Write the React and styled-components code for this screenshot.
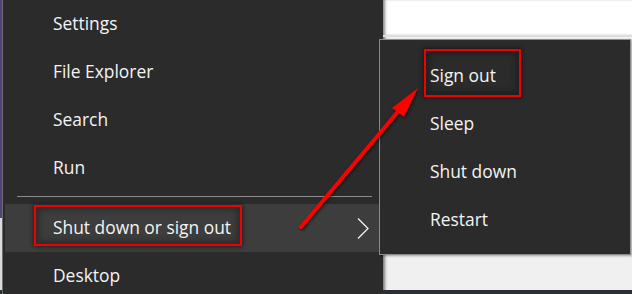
import React from "react";
import styled, { createGlobalStyle } from "styled-components";

const GlobalStyle = createGlobalStyle`
  html, body {
    margin: 0;
    padding: 0;
    background: #2b2b2b;
    overflow: hidden;
  }
  * {
    box-sizing: border-box;
  }
`;

const mainItems = ["Settings", "File Explorer", "Search", "Run"];
const powerItems = ["Sign out", "Sleep", "Shut down", "Restart"];

const App = () => {
  return (
    <>
      <GlobalStyle />
      <Screen>
        <EdgeStrip />
        <StartMenu>
          {mainItems.map((label) => (
            <MenuItem key={label}>{label}</MenuItem>
          ))}
          <Separator />
          <MenuItem active>
            Shut down or sign out
            <Chevron viewBox="0 0 12 21">
              <polyline points="1,0.5 11,10.5 1,20.5" />
            </Chevron>
          </MenuItem>
          <MenuItem>Desktop</MenuItem>
        </StartMenu>
        <DesktopArea>
          <WindowTop />
          <WindowBody />
          <Taskbar />
        </DesktopArea>

        <Flyout>
          {powerItems.map((label) => (
            <FlyoutItem key={label}>{label}</FlyoutItem>
          ))}
        </Flyout>

        <Callout left={34} top={205} width={208} height={41} />
        <Callout left={424} top={49} width={97} height={48} />

        <ArrowLayer viewBox="0 0 632 294">
          <line x1="301" y1="227" x2="401" y2="108" />
          <polygon points="418,88 392,108 404,117" />
        </ArrowLayer>
      </Screen>
    </>
  );
};

export default App;

const Screen = styled.div`
  position: relative;
  display: flex;
  width: 632px;
  height: 294px;
  overflow: hidden;
  font-family: "Open Sans", "Noto Sans", sans-serif;
`;

const EdgeStrip = styled.div`
  width: 3px;
  flex-shrink: 0;
  border-right: 1px solid #6d6d6d;
  background: linear-gradient(
    to bottom,
    #54437a 0,
    #54437a 218px,
    #dcdcdc 218px,
    #dcdcdc 290px,
    #263032 290px
  );
`;

const StartMenu = styled.div`
  width: 380px;
  flex-shrink: 0;
  display: flex;
  flex-direction: column;
  padding-left: 2px;
  background: #2b2b2b;
`;

const MenuItem = styled.div`
  position: relative;
  display: flex;
  align-items: center;
  height: 48px;
  flex-shrink: 0;
  padding: 0 0 3px 48px;
  font-size: 17.4px;
  color: #f4f4f4;
  background: ${({ active }) => (active ? "#3d3d3d" : "transparent")};
`;

const Chevron = styled.svg`
  position: absolute;
  right: 14px;
  top: 14px;
  width: 12px;
  height: 21px;
  fill: none;
  stroke: #f2f2f2;
  stroke-width: 1.3;
`;

const Separator = styled.div`
  height: 12px;
  flex-shrink: 0;
  padding: 4px 11px 0 12px;

  &::before {
    content: "";
    display: block;
    height: 1px;
    background: #8a8a8a;
  }
`;

const DesktopArea = styled.div`
  flex: 1;
  display: flex;
  flex-direction: column;
  background: #f0f0f0;
  box-shadow: inset 3px 0 3px -1px #7a7a7a;
`;

const WindowTop = styled.div`
  height: 37px;
  background: #ffffff;
  border-bottom: 2px solid #dedede;
  box-shadow: inset 3px 0 3px -1px #8a8a8a;
`;

const WindowBody = styled.div`
  flex: 1;
`;

const Taskbar = styled.div`
  height: 4px;
  background: #263032;
`;

const Flyout = styled.div`
  position: absolute;
  left: 379px;
  top: 39px;
  width: 252px;
  height: 216px;
  display: flex;
  flex-direction: column;
  padding-top: 12px;
  background: #2b2b2b;
  border: 1px solid #8c8c8c;
  box-shadow: 1px 1px 2px rgba(0, 0, 0, 0.35);
`;

const FlyoutItem = styled.div`
  display: flex;
  align-items: center;
  height: 48px;
  padding: 0 0 3px 50px;
  font-size: 17.4px;
  color: #f4f4f4;
`;

const Callout = styled.div`
  position: absolute;
  left: ${({ left }) => left}px;
  top: ${({ top }) => top}px;
  width: ${({ width }) => width}px;
  height: ${({ height }) => height}px;
  border: 2px solid #f00000;
  box-shadow: 0 0 4px 1px rgba(0, 0, 0, 0.45),
    inset 0 0 6px 3px rgba(0, 0, 0, 0.3);
  pointer-events: none;
`;

const ArrowLayer = styled.svg`
  position: absolute;
  left: 0;
  top: 0;
  width: 632px;
  height: 294px;
  pointer-events: none;
  filter: drop-shadow(1px 1px 1.5px rgba(0, 0, 0, 0.7));

  line {
    stroke: #ff0000;
    stroke-width: 4;
    stroke-linecap: round;
  }

  polygon {
    fill: #ff0000;
  }
`;
